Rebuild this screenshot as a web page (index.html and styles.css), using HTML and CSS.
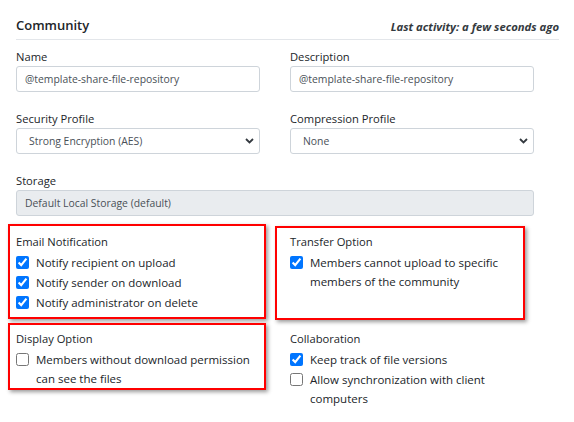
FILE: index.html
```html
<!DOCTYPE html>
<html>
<head>
<meta charset="utf-8">
<link rel="stylesheet" href="styles.css">
</head>
<body>
<div class="page">
  <div class="header">
    <div class="title">Community</div>
    <div class="activity">Last activity: a few seconds ago</div>
  </div>
  <div class="form">
    <div class="field">
      <label class="lbl">Name</label>
      <input class="ctrl" type="text" value="@template-share-file-repository">
    </div>
    <div class="field">
      <label class="lbl">Description</label>
      <input class="ctrl" type="text" value="@template-share-file-repository">
    </div>
    <div class="field">
      <label class="lbl">Security Profile</label>
      <select class="ctrl sel"><option>Strong Encryption (AES)</option></select>
    </div>
    <div class="field">
      <label class="lbl">Compression Profile</label>
      <select class="ctrl sel"><option>None</option></select>
    </div>
    <div class="field wide">
      <label class="lbl">Storage</label>
      <input class="ctrl disabled" type="text" value="Default Local Storage (default)" readonly>
    </div>
  </div>
  <div class="groups">
    <div class="group hl hl-email">
      <div class="lbl">Email Notification</div>
      <label class="check"><input type="checkbox" checked><span>Notify recipient on upload</span></label>
      <label class="check"><input type="checkbox" checked><span>Notify sender on download</span></label>
      <label class="check"><input type="checkbox" checked><span>Notify administrator on delete</span></label>
    </div>
    <div class="group hl hl-transfer">
      <div class="lbl">Transfer Option</div>
      <label class="check"><input type="checkbox" checked><span>Members cannot upload to specific members of the community</span></label>
    </div>
    <div class="group hl hl-display">
      <div class="lbl">Display Option</div>
      <label class="check"><input type="checkbox"><span>Members without download permission can see the files</span></label>
    </div>
    <div class="group">
      <div class="lbl">Collaboration</div>
      <label class="check"><input type="checkbox" checked><span>Keep track of file versions</span></label>
      <label class="check"><input type="checkbox"><span>Allow synchronization with client computers</span></label>
    </div>
  </div>
</div>
</body>
</html>
```
FILE: styles.css
```css
* { box-sizing: border-box; }
html, body { margin: 0; padding: 0; background: #fff; }
body {
  font-family: "Open Sans", "Noto Sans", sans-serif;
  color: #212529;
  width: 574px;
  height: 422px;
  overflow: hidden;
}
.page {
  padding: 15px 0 0 16px;
}
.header {
  width: 543px;
  display: flex;
  justify-content: space-between;
  align-items: flex-end;
  padding-bottom: 4px;
  border-bottom: 1px solid #e3e6ea;
}
.title {
  font-size: 13px;
  font-weight: 600;
  line-height: 20px;
}
.activity {
  font-size: 11.3px;
  font-style: italic;
  font-weight: 700;
  line-height: 16px;
  color: #343a40;
}
.form {
  margin-top: 8px;
  display: grid;
  grid-template-columns: 244px 244px;
  column-gap: 30px;
  row-gap: 18px;
}
.field { display: flex; flex-direction: column; }
.field.wide { grid-column: 1 / 3; }
.lbl {
  display: block;
  font-size: 11.2px;
  line-height: 18px;
}
.ctrl {
  height: 26px;
  border: 1px solid #ced4da;
  border-radius: 3px;
  padding: 0 8px;
  font-family: inherit;
  font-size: 10.4px;
  color: #495057;
  background: #fff;
  outline: none;
  margin: 0;
}
.sel {
  appearance: none;
  -webkit-appearance: none;
  padding-left: 12px;
  background-image: url("data:image/svg+xml,%3Csvg xmlns='http://www.w3.org/2000/svg' width='9' height='6' viewBox='0 0 9 6'%3E%3Cpath d='M1 1l3.5 3.5L8 1' fill='none' stroke='%23343a40' stroke-width='1.8'/%3E%3C/svg%3E");
  background-repeat: no-repeat;
  background-position: right 5px center;
  background-size: 9px 6px;
}
.disabled { background: #e9ecef; }
.groups {
  margin-top: 17px;
  display: grid;
  grid-template-columns: 244px 244px;
  column-gap: 30px;
  row-gap: 18px;
}
.group { position: relative; }
.check {
  display: flex;
  align-items: flex-start;
  font-size: 11.5px;
  line-height: 19px;
  margin-top: 1px;
}
.group .lbl + .check { margin-top: 2px; }
.check input {
  margin: 3px 7px 0 0;
  width: 13px;
  height: 13px;
  flex: none;
}
.hl::after {
  content: "";
  position: absolute;
  border: 2px solid #f00;
  box-shadow: 2px 2px 4px rgba(0,0,0,0.4);
  pointer-events: none;
}
.hl-email::after { top: -9px; left: -8px; right: -6px; height: 91px; }
.hl-transfer::after { top: -7px; left: -15px; right: 9px; height: 90px; }
.hl-display::after { top: -7px; left: -8px; right: -6px; height: 63px; }
```
